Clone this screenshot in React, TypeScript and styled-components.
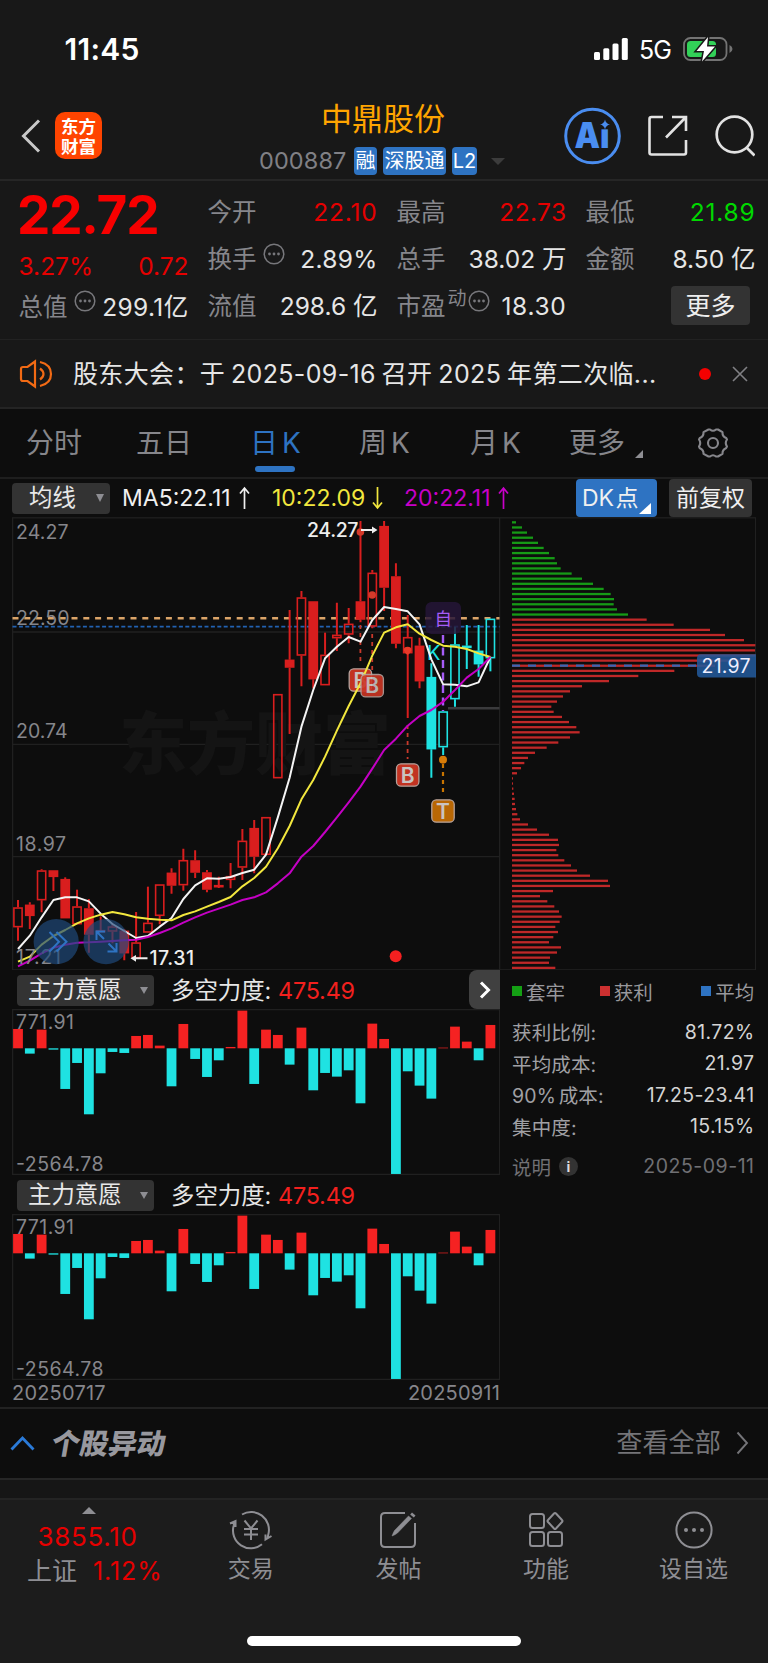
import React from "react";
import styled, { createGlobalStyle } from "styled-components";

const BLUE = "#2e73c2";
const RED = "#e60000";
const UP = "#d91e1e";
const DOWN = "#1fe2e2";
const GRAY = "#86868b";
const FONT = `Inter, "Noto Sans CJK SC", sans-serif`;

const Global = createGlobalStyle`
  * { box-sizing: border-box; }
  body { margin: 0; background: #0d0d0d; }
  svg { display: block; flex: none; }
`;

const Screen = styled.div`
  width: 768px;
  height: 1663px;
  display: flex;
  flex-direction: column;
  background: #0d0d0d;
  color: #e6e6e6;
  font-family: ${FONT};
  overflow: hidden;
  white-space: nowrap;
`;

const StatusBar = styled.div`
  height: 100px;
  flex: none;
  background: #181818;
  display: flex;
  justify-content: space-between;
  padding: 31px 35px 0 64.5px;
`;
const Clock = styled.div`
  font-size: 30px;
  font-weight: 600;
  line-height: 36px;
  color: #fff;
  letter-spacing: 0.3px;
`;
const StatusIcons = styled.div`
  display: flex;
  align-items: center;
  height: 36px;
  gap: 11px;
`;
const Network = styled.span`
  font-size: 25px;
  font-weight: 400;
  line-height: 36px;
  padding-top: 1px;
  color: #fff;
  letter-spacing: -1px;
  width: 33px;
`;

const Header = styled.header`
  height: 81px;
  flex: none;
  background: #181818;
  border-bottom: 2px solid #262626;
  display: flex;
`;
const HeaderSide = styled.div<{ $w: number; $gap: number; $pl: number }>`
  width: ${(p) => p.$w}px;
  flex: none;
  padding: 7px 0 0 ${(p) => p.$pl}px;
  display: flex;
  align-items: flex-start;
  gap: ${(p) => p.$gap}px;
`;
const Logo = styled.div`
  width: 47px;
  height: 47px;
  margin-top: 5px;
  border-radius: 10px;
  background: #ff4400;
  color: #fff;
  font: 700 17.5px/19.5px "Noto Sans CJK SC", sans-serif;
  display: flex;
  flex-direction: column;
  align-items: center;
  justify-content: center;
`;
const TitleBlock = styled.div`
  width: 305px;
  flex: none;
  display: flex;
  flex-direction: column;
`;
const StockName = styled.h1`
  margin: 0 0 0 62px;
  font-size: 31px;
  line-height: 38px;
  font-weight: 400;
  color: #ffa500;
`;
const CodeRow = styled.div`
  display: flex;
  align-items: center;
  height: 28px;
  margin-top: 9px;
`;
const Code = styled.span`
  width: 95px;
  font-size: 23.5px;
  line-height: 28px;
  color: #808085;
  letter-spacing: 0.1px;
`;
const Badge = styled.span<{ $w: number }>`
  width: ${(p) => p.$w}px;
  height: 28px;
  margin-right: 6px;
  border-radius: 4px;
  background: ${BLUE};
  color: #fff;
  font-size: 20px;
  line-height: 28px;
  display: flex;
  justify-content: center;
`;
const Caret = styled.i<{ $w: number; $h: number; $c: string }>`
  border: ${(p) => p.$w / 2}px solid transparent;
  border-top: ${(p) => p.$h}px solid ${(p) => p.$c};
  border-bottom: 0;
`;

const Quote = styled.section`
  height: 159px;
  flex: none;
  background: #181818;
  border-bottom: 1px solid #222;
  padding: 7px 12.5px 0 18.5px;
  display: grid;
  grid-template-columns: repeat(4, 170px);
  column-gap: 19px;
`;
const Column = styled.div`
  display: flex;
  flex-direction: column;
`;
const Field = styled.div<{ $h?: number }>`
  height: ${(p) => p.$h ?? 47.4}px;
  display: flex;
  align-items: center;
  font-size: 24.5px;
  line-height: 30px;
`;
const Price = styled.div`
  height: 54px;
  font-size: 53px;
  line-height: 55px;
  font-weight: 700;
  letter-spacing: -1.2px;
  text-indent: -1.5px;
  color: #f70000;
`;
const Label = styled.span`
  color: ${GRAY};
`;
const Value = styled.span<{ $c?: string; $ls?: number }>`
  margin-left: auto;
  color: ${(p) => p.$c ?? "#e6e6e6"};
  letter-spacing: ${(p) => p.$ls ?? 0}px;
`;
const Superscript = styled.sup`
  font-size: 19px;
  line-height: 20px;
  color: ${GRAY};
  margin: -15px -5px 0 2px;
`;
const MoreInfo = styled.svg`
  margin: -11px 0 0 6px;
`;
const MoreButton = styled.button`
  margin: -1px 5.5px 0 auto;
  width: 79px;
  height: 39px;
  border: 0;
  padding: 0;
  border-radius: 4px;
  background: #333;
  color: #eee;
  font: 400 25px/38px ${FONT};
`;

const Notice = styled.section`
  height: 69px;
  flex: none;
  background: #181818;
  border-bottom: 2px solid #242424;
  display: flex;
  align-items: center;
  padding: 0 20px 0 19px;
`;
const NoticeText = styled.span`
  flex: 1;
  margin-left: 19px;
  font-size: 25px;
  line-height: 32px;
  letter-spacing: 0.35px;
  word-spacing: -1.5px;
`;
const Dot = styled.i`
  width: 12px;
  height: 12px;
  border-radius: 50%;
  background: #f40000;
  margin-right: 21px;
`;

const Tabs = styled.nav`
  height: 70px;
  flex: none;
  border-bottom: 2px solid #1e1e1e;
  display: grid;
  grid-template-columns: 110px 114px 109px 111px 99px 127.5px auto;
  padding-left: 26px;
  align-items: center;
`;
const Tab = styled.div<{ $on?: boolean }>`
  position: relative;
  font-size: 28px;
  line-height: 69px;
  height: 68px;
  color: ${(p) => (p.$on ? BLUE : GRAY)};
  word-spacing: -4px;
  &::after {
    content: "";
    display: ${(p) => (p.$on ? "block" : "none")};
    position: absolute;
    left: 4.5px;
    bottom: 5px;
    width: 40px;
    height: 6px;
    border-radius: 3px;
    background: ${BLUE};
  }
`;
const TabMore = styled(Tab)`
  display: flex;
  gap: 10px;
`;
const Corner = styled.i<{ $w: number; $h: number; $c: string; $b: number }>`
  width: 0;
  height: 0;
  align-self: flex-end;
  margin-bottom: ${(p) => p.$b}px;
  border-left: ${(p) => p.$w}px solid transparent;
  border-bottom: ${(p) => p.$h}px solid ${(p) => p.$c};
`;

const MaRow = styled.div`
  height: 38px;
  flex: none;
  display: flex;
  align-items: center;
  padding-left: 12px;
  font-size: 23px;
`;
const Select = styled.div<{ $w: number; $pl: number }>`
  width: ${(p) => p.$w}px;
  height: 31px;
  border-radius: 4px;
  background: #333;
  color: #e8e8e8;
  font-size: 23.4px;
  line-height: 32px;
  padding: 0 6.5px 0 ${(p) => p.$pl}px;
  display: flex;
  align-items: center;
  justify-content: space-between;
`;
const Average = styled.span<{ $c: string; $w: number; $gap: number }>`
  width: ${(p) => p.$w}px;
  color: ${(p) => p.$c};
  line-height: 39px;
  display: flex;
  align-items: center;
  gap: ${(p) => p.$gap}px;
`;
const Chip = styled.div<{ $w: number; $bg: string }>`
  width: ${(p) => p.$w}px;
  height: 38px;
  border-radius: 4px;
  background: ${(p) => p.$bg};
  color: #f0f0f0;
  line-height: 38px;
  word-spacing: -5px;
  display: flex;
  justify-content: center;
  margin-right: 12px;
`;

const Body = styled.main`
  height: 892px;
  flex: none;
  display: flex;
  padding-left: 12px;
  border-bottom: 2px solid #222;
`;
const Side = styled.div<{ $w: number }>`
  width: ${(p) => p.$w}px;
`;
const IndicatorHead = styled.div`
  height: 39px;
  display: flex;
  align-items: center;
  padding: 1.5px 0 0 5px;
  font-size: 23.4px;
  line-height: 31px;
`;
const IndicatorName = styled.span`
  margin-left: 17px;
  width: 107px;
`;
const IndicatorValue = styled.span`
  color: #f2201e;
  flex: 1;
  letter-spacing: -0.2px;
`;
const NextButton = styled.div`
  width: 31px;
  height: 39px;
  margin-top: -1px;
  border-radius: 8px 0 0 8px;
  background: #404040;
  display: flex;
  align-items: center;
  justify-content: center;
`;
const Dates = styled.div`
  display: flex;
  justify-content: space-between;
  font-size: 20px;
  line-height: 27px;
  letter-spacing: 0.2px;
  color: ${GRAY};
`;

const Stats = styled.div`
  padding: 6px 1.5px 0 12px;
  font-size: 19.5px;
`;
const Legend = styled.div`
  height: 30px;
  display: grid;
  grid-template-columns: 87.7px 101.5px auto;
  align-items: center;
  color: #98989c;
  margin-bottom: 10px;
`;
const LegendItem = styled.span<{ $c: string }>`
  display: flex;
  align-items: center;
  gap: 4px;
  &::before {
    content: "";
    width: 10px;
    height: 10px;
    background: ${(p) => p.$c};
  }
`;
const Stat = styled.div`
  height: 31.5px;
  display: flex;
  justify-content: space-between;
  align-items: center;
  color: #d4d4d4;
  letter-spacing: 0.4px;
  span:first-child {
    color: #a0a0a4;
    word-spacing: -3px;
    letter-spacing: 0.15px;
  }
`;
const StatFoot = styled.div`
  height: 32px;
  margin-top: 8px;
  display: flex;
  align-items: center;
  color: #707074;
  span:last-child {
    letter-spacing: 0.5px;
  }
`;
const Info = styled.i`
  width: 19px;
  height: 19px;
  margin: 0 auto 0 8px;
  border-radius: 50%;
  background: #333;
  color: #ddd;
  font: 700 14px/19px Inter, sans-serif;
  text-align: center;
`;

const Moves = styled.section`
  height: 71px;
  flex: none;
  border-bottom: 2px solid #262626;
  display: flex;
  align-items: center;
  padding: 0 19px 1px 10px;
`;
const MovesTitle = styled.h2`
  margin: -3px auto 0 17px;
  font: 900 28.5px/40px "Noto Sans CJK SC", sans-serif;
  color: #98989e;
  transform: skewX(-10deg);
`;
const ViewAll = styled.span`
  font-size: 26.2px;
  line-height: 40px;
  color: #747478;
  margin-right: 15px;
`;
const Strip = styled.div`
  height: 20px;
  flex: none;
  background: #161616;
  border-bottom: 2px solid #242424;
`;

const Footer = styled.footer`
  flex: 1;
  background: #1c1c1c;
  display: flex;
  flex-direction: column;
  justify-content: space-between;
  align-items: center;
`;
const FooterItems = styled.div`
  display: grid;
  grid-template-columns: 177px repeat(4, 147.6px);
  width: 768px;
`;
const FooterItem = styled.div`
  display: flex;
  flex-direction: column;
  align-items: center;
  padding-top: 9.5px;
  font-size: 23px;
  line-height: 30px;
  color: #8e8e93;
  svg {
    margin-bottom: 4.5px;
  }
`;
const IndexItem = styled.div`
  padding: 7px 0 0 27px;
  color: #8e8e93;
`;
const UpMark = styled.i`
  display: block;
  width: 14px;
  margin-left: 55px;
  border: 7px solid transparent;
  border-bottom: 7px solid #8e8e93;
  border-top: 0;
`;
const IndexValue = styled.div`
  margin: 7px 0 0 10.5px;
  font-size: 26px;
  line-height: 32px;
  color: ${RED};
  letter-spacing: 0.7px;
`;
const IndexRow = styled.div`
  display: flex;
  gap: 16px;
  margin-top: 2px;
  font-size: 25px;
  line-height: 32px;
  span:last-child {
    color: ${RED};
    letter-spacing: 0.9px;
  }
`;
const HomeBar = styled.div`
  width: 274px;
  height: 10px;
  border-radius: 5px;
  background: #fff;
  margin-bottom: 17px;
`;

/* Price levels are stored in thirds of a pixel below y = 510. */
const py = (v: number) => 510 + v / 3;
const px = (i: number) => 18 + 11.81 * i;

/* [filled, body top, body bottom, high, low] */
const candles: [number, number, number, number, number][] = [
  [0, 1192, 1252, 1170, 1292], [1, 1184, 1218, 1177, 1257], [0, 1081, 1171, 1078, 1207],
  [1, 1081, 1101, 1081, 1143], [1, 1107, 1225, 1102, 1225], [0, 1189, 1243, 1139, 1243],
  [1, 1195, 1274, 1167, 1328], [0, 1260, 1263, 1219, 1263], [0, 1249, 1265, 1240, 1300],
  [1, 1262, 1330, 1258, 1351], [0, 1297, 1345, 1206, 1345], [0, 1238, 1268, 1130, 1268],
  [0, 1123, 1218, 1123, 1243], [1, 1088, 1127, 1075, 1151], [0, 1050, 1126, 1016, 1142],
  [1, 1051, 1088, 1021, 1104], [1, 1087, 1139, 1080, 1147], [0, 1125, 1127, 1100, 1134],
  [0, 1098, 1110, 1059, 1135], [0, 992, 1073, 957, 1110], [1, 954, 1040, 930, 1090],
  [0, 921, 1035, 921, 1035], [0, 552, 805, 552, 805], [1, 449, 473, 300, 672],
  [0, 262, 437, 243, 529], [1, 274, 508, 274, 535], [0, 434, 526, 368, 526],
  [0, 374, 385, 278, 423], [0, 341, 374, 294, 400], [1, 274, 329, 33, 337],
  [0, 188, 350, 180, 355], [1, 48, 233, 33, 303], [1, 199, 401, 160, 415],
  [0, 381, 430, 315, 624], [1, 407, 514, 383, 535], [1, 501, 718, 460, 803],
  [0, 604, 712, 604, 735], [0, 403, 568, 350, 590], [0, 407, 409, 345, 477],
  [1, 422, 463, 345, 500], [0, 326, 445, 326, 484],
];
const ma5 = [1317, 1277, 1222, 1170, 1162, 1162, 1174, 1211, 1242, 1263, 1284, 1278, 1250, 1224, 1167, 1126, 1105, 1106, 1101, 1089, 1079, 1034, 922, 803, 650, 540, 445, 410, 381, 395, 330, 291, 297, 304, 343, 448, 523, 524, 529, 517, 441];
const ma10 = [1355, 1340, 1304, 1278, 1260, 1240, 1225, 1214, 1206, 1213, 1222, 1226, 1229, 1231, 1215, 1204, 1190, 1176, 1161, 1129, 1104, 1070, 1015, 948, 868, 810, 740, 662, 588, 520, 437, 368, 352, 343, 371, 390, 407, 410, 417, 430, 441];
const ma20 = [1369, 1352, 1330, 1313, 1304, 1298, 1297, 1295, 1293, 1291, 1289, 1281, 1269, 1255, 1238, 1222, 1208, 1196, 1184, 1170, 1162, 1147, 1120, 1090, 1040, 1008, 966, 922, 877, 830, 776, 720, 686, 647, 618, 600, 575, 540, 503, 477, 441];

/* Length of each price bucket, top to bottom; the first 19 are above the last price. */
const buckets = [
  12, 30, 45, 63, 78, 95, 111, 128, 135, 146, 179, 210, 243, 275, 296, 306, 305, 315, 348,
  404, 485, 594, 639, 696, 730, 729, 730, 689, 609, 487, 379, 291, 210, 174, 153, 135, 118, 125,
  150, 171, 193, 203, 174, 139, 104, 69, 48, 37, 27, 15, 3, 3, 4, 6, 8, 9, 12, 16, 24, 48, 75,
  111, 138, 141, 133, 139, 157, 177, 195, 234, 288, 294, 123, 84, 106, 127, 141, 149, 143, 130,
  138, 124, 111, 147, 135, 114, 111, 130,
];

const force = [58, -16, 56, -4, -122, -44, -198, -75, -11, -14, 37, 40, 8, -114, 73, -32, -86, -36, 4, 113, -107, 56, 40, -49, 62, -126, -74, -85, -66, -165, 74, 28, -377, -69, -112, -151, 2, 65, 20, -36, 70];

const Line = ({ data, color }: { data: number[]; color: string }) => (
  <polyline points={data.map((v, i) => `${px(i)},${py(v)}`).join(" ")} fill="none" stroke={color} strokeWidth="2" strokeLinejoin="round" />
);

const AxisText = ({ x, y, children, fill = GRAY, w }: { x: number; y: number; children: string; fill?: string; w?: number }) => (
  <text x={x} y={y} fill={fill} fontSize="19.5" fontFamily="Inter, sans-serif" textLength={w}>{children}</text>
);

const Tag = ({ x, y, c, t, o = 1 }: { x: number; y: number; c: string; t: string; o?: number }) => (
  <g opacity={o}>
    <rect x={x - 11.2} y={y - 11.2} width="22.4" height="22.4" rx="4.5" fill={c} stroke="#b5a29c" strokeWidth="1.3" />
    <text x={x} y={y + 7.6} textAnchor="middle" fontFamily="Inter, sans-serif" fontWeight="600" fontSize="21" fill="#c9c3c1">{t}</text>
  </g>
);

function PriceChart() {
  return (
    <svg width="488" height="453" viewBox="12 517 488 453">
      <g stroke="#202020" strokeWidth="1.3" fill="none">
        <rect x="12.6" y="517.8" width="487" height="452" />
        <path d="M12 632H500M12 744.3H500M12 856.7H500" />
      </g>
      <text x="119" y="769" fontFamily='"Noto Sans CJK SC", sans-serif' fontWeight="900" fontSize="68" fill="#141414">东方财富</text>
      <path d="M448 708.3H499.5" stroke="#3a3a3c" strokeWidth="2.4" />
      <path d="M12.5 618.3H499.5" stroke="#dba468" strokeWidth="2.4" strokeDasharray="6 5.8" />
      <path d="M12.5 626.7H499.5" stroke="#2262b2" strokeWidth="1.8" strokeDasharray="4 2.4" />
      {candles.map(([filled, top, bottom, high, low], i) => {
        const color = i < 35 ? UP : DOWN;
        const x = px(i);
        const body = Math.max(1, (bottom - top) / 3 - 1.4);
        return (
          <g key={i} stroke={color} strokeWidth="1.6">
            <path d={`M${x} ${py(high)}V${py(top)}M${x} ${py(bottom)}V${py(low)}`} strokeWidth="2" />
            <rect x={x - 4.1} y={py(top) + 0.7} width="8.2" height={body} fill={filled ? color : "none"} />
          </g>
        );
      })}
      <g stroke="#c8392b" strokeWidth="1.8" strokeDasharray="4 4">
        <path d="M360.4 625V664M372.2 634V671M407.6 725V759" />
      </g>
      <g fill="#d43a2a">
        <circle cx="360.4" cy="532" r="3.8" />
        <circle cx="372.2" cy="595" r="3.8" />
        <path d="M403.8 650a3.8 3.3 0 0 1 7.6 0q0 2.5-3.8 5q-3.8-2.5-3.8-5z" fill="#e83a28" />
      </g>
      <Tag x={360.4} y={680} c="#c23322" t="B" />
      <rect x="425.5" y="602" width="35.5" height="32" rx="6" fill="#261638" opacity="0.85" />
      <text x="443.2" y="625" textAnchor="middle" fontFamily='"Noto Sans CJK SC", sans-serif' fontSize="17.5" fill="#a65cf7">自</text>
      <path d="M443 635V711" stroke="#a65cf7" strokeWidth="2.4" strokeDasharray="8 4.5" />
      <text x="427" y="659.5" fontFamily="Inter, sans-serif" fontSize="20" fill={DOWN}>K</text>
      <Line data={ma5} color="#f4f4f4" />
      <Line data={ma10} color="#f2e73e" />
      <Line data={ma20} color="#c400c4" />
      <Tag x={372.2} y={685.7} c="#cc3524" t="B" o={0.9} />
      <Tag x={407.7} y={775} c="#c23322" t="B" />
      <path d="M443 764V796" stroke="#c87400" strokeWidth="2.2" strokeDasharray="4 4" />
      <circle cx="443" cy="759.7" r="4" fill="#d87c08" />
      <Tag x={443} y={811} c="#b96704" t="T" />
      <circle cx="395.7" cy="956.3" r="6" fill="#f52020" />
      <AxisText x={16} y={539.3} w={52.5}>24.27</AxisText>
      <AxisText x={16} y={624.7} w={53.5}>22.50</AxisText>
      <AxisText x={16} y={738} w={51.5}>20.74</AxisText>
      <AxisText x={16} y={850.7} w={50}>18.97</AxisText>
      <AxisText x={16} y={963.7} w={45}>17.21</AxisText>
      <g fill="#1f4a7c" opacity="0.68">
        <circle cx="56.2" cy="941.7" r="22.6" />
        <circle cx="106" cy="941.7" r="22.6" />
      </g>
      <g fill="none" stroke={BLUE} strokeWidth="2">
        <path d="M49.5 932L59 941.7L49.5 951.5M56.5 932L66.5 941.7L56.5 951.5" />
        <path d="M105 931.5H96.5V940M96.5 931.5L104 939M107.5 951.5H116.5V943M116.5 951.5L108.5 943.5" />
      </g>
      <g fill="#eee" stroke="#eee">
        <path d="M361 530H373M133 958.3H147.5" strokeWidth="2" />
        <path d="M372 526.5L377.5 530L372 533.5zM136 955L130.5 958.3L136 961.8z" stroke="none" />
      </g>
      <g fontWeight="500">
        <AxisText x={307} y={537.3} fill="#eee" w={51.5}>24.27</AxisText>
        <AxisText x={149.5} y={965.3} fill="#eee" w={44.5}>17.31</AxisText>
      </g>
    </svg>
  );
}

function CostProfile() {
  return (
    <svg width="256" height="453" viewBox="500 517 256 453">
      <rect x="499.6" y="517.8" width="256" height="452" fill="none" stroke="#202020" strokeWidth="1.3" />
      {buckets.map((n, i) => (
        <rect key={i} x="512" y={521.2 + i * 5.121} width={n / 3} height="2.3" fill={i < 19 ? "#169a16" : "#bf2828"} />
      ))}
      <path d="M512 665.7H700" stroke="#3866b4" strokeWidth="2.3" strokeDasharray="8 8" />
      <path d="M756 654.2H701a4 4 0 0 0-4 4V673.5a4 4 0 0 0 4 4H756z" fill="#22599a" opacity="0.88" />
      <text x="701.5" y="672.9" fontFamily="Inter, sans-serif" fontSize="19.5" fill="#eef" textLength="49">21.97</text>
    </svg>
  );
}

function ForceChart() {
  return (
    <svg width="488" height="166" viewBox="12 0 488 166">
      <rect x="12.6" y="0.6" width="487" height="164.8" fill="none" stroke="#202020" strokeWidth="1.3" />
      <AxisText x={16} y={19.6} w={58}>771.91</AxisText>
      <AxisText x={16} y={161.6} w={87.5}>-2564.78</AxisText>
      {force.map((v, i) => (
        <rect key={i} x={px(i) - 4.9} y={39.3 - Math.max(v, 0) / 3} width="9.8" height={Math.abs(v) / 3} fill={v > 0 ? "#f52222" : DOWN} />
      ))}
    </svg>
  );
}

const Indicator = ({ nav }: { nav?: boolean }) => (
  <>
    <IndicatorHead>
      <Select $w={137} $pl={11}>主力意愿<Caret $w={8.5} $h={7.5} $c="#8e8e93" /></Select>
      <IndicatorName>多空力度:</IndicatorName>
      <IndicatorValue>475.49</IndicatorValue>
      {nav && (
        <NextButton>
          <svg width="12" height="18" viewBox="0 0 12 18"><path d="M2 1.5L9.5 9L2 16.5" fill="none" stroke="#fff" strokeWidth="3" /></svg>
        </NextButton>
      )}
    </IndicatorHead>
    <ForceChart />
  </>
);

const Ellipsis = () => (
  <MoreInfo width="22" height="22" viewBox="0 0 22 22">
    <circle cx="11" cy="11" r="9.8" fill="none" stroke="#77777b" strokeWidth="1.5" />
    <g fill="#77777b"><circle cx="6.5" cy="11" r="1.4" /><circle cx="11" cy="11" r="1.4" /><circle cx="15.5" cy="11" r="1.4" /></g>
  </MoreInfo>
);

const Trend = ({ down }: { down?: boolean }) => (
  <svg width="11" height="24" viewBox="0 0 11 24" fill="none" stroke="currentColor" strokeWidth="1.7">
    <path d={down ? "M5.5 1V22M1 16.5L5.5 22L10 16.5" : "M5.5 23V2M1 7.5L5.5 2L10 7.5"} />
  </svg>
);

export default function App() {
  return (
    <Screen>
      <Global />
      <StatusBar>
        <Clock>11:45</Clock>
        <StatusIcons>
          <svg width="34" height="22" viewBox="0 0 34 22" fill="#fff">
            <rect y="14" width="6" height="8" rx="1.5" /><rect x="9.3" y="10.3" width="6" height="11.7" rx="1.5" />
            <rect x="18.5" y="5.5" width="6" height="16.5" rx="1.5" /><rect x="27.8" width="6" height="22" rx="1.5" />
          </svg>
          <Network>5G</Network>
          <svg width="50" height="26" viewBox="0 0 50 26">
            <rect x="1" y="2" width="42.5" height="22" rx="6.5" fill="none" stroke="#737373" strokeWidth="1.8" />
            <path d="M46.5 9q3 1.5 3 4t-3 4z" fill="#737373" />
            <rect x="4" y="5" width="29" height="16" rx="3.5" fill="#32d158" />
            <path d="M25 1L13.5 15H21L19 25.5L32 10.5H24z" fill="#fff" stroke="#181818" strokeWidth="3" paintOrder="stroke" />
          </svg>
        </StatusIcons>
      </StatusBar>

      <Header>
        <HeaderSide $w={259} $gap={14} $pl={21}>
          <svg width="20" height="58" viewBox="0 0 20 58"><path d="M18 13.5L2.5 29L18 44.5" fill="none" stroke="#c8c8c8" strokeWidth="3" /></svg>
          <Logo><span>东方</span><span>财富</span></Logo>
        </HeaderSide>
        <TitleBlock>
          <StockName>中鼎股份</StockName>
          <CodeRow>
            <Code>000887</Code>
            <Badge $w={23}>融</Badge>
            <Badge $w={63}>深股通</Badge>
            <Badge $w={25}>L2</Badge>
            <Caret $w={14} $h={7} $c="#3c3c3c" style={{ marginLeft: 8 }} />
          </CodeRow>
        </TitleBlock>
        <HeaderSide $w={204} $gap={25.5} $pl={0}>
          <svg width="58" height="58" viewBox="0 0 58 58">
            <circle cx="28.500" cy="29" r="26.8" fill="none" stroke="#4a8df0" strokeWidth="3" />
            <text x="10.5" y="41" fontFamily="Inter, sans-serif" fontWeight="900" fontSize="35" fill="#4a8df0" textLength="35" lengthAdjust="spacingAndGlyphs">Ai</text>
            <rect x="33.5" y="12" width="13" height="10.3" fill="#181818" />
            <path d="M41 12.500Q41.8 16.700 46 17.500Q41.8 18.300 41 22.500Q40.2 18.300 36 17.500Q40.2 16.700 41 12.500z" fill="#4a8df0" />
          </svg>
          <svg width="40" height="58" viewBox="0 0 40 58" fill="none" stroke="#e2e2e2" strokeWidth="2.6">
            <path d="M15 10H3.5Q1.5 10 1.5 12V45.5Q1.5 47.5 3.5 47.5H36Q38 47.5 38 45.5V33M24 10H38V24M37.5 10.5L18 30.5" />
          </svg>
          <svg width="42" height="58" viewBox="0 0 42 58" fill="none" stroke="#e2e2e2" strokeWidth="2.7">
            <circle cx="21.500" cy="27.5" r="17.8" /><path d="M33.5 40.5L41.500 48.5" />
          </svg>
        </HeaderSide>
      </Header>

      <Quote>
        <Column>
          <Price>22.72</Price>
          <Field $h={47}><Value $c={RED} style={{ margin: 0 }}>3.27%</Value><Value $c={RED}>0.72</Value></Field>
          <Field $h={35}><Label>总值</Label><Ellipsis /><Value $ls={0.35}>299.1亿</Value></Field>
        </Column>
        <Column>
          <Field><Label>今开</Label><Value $c={RED} $ls={0.8}>22.10</Value></Field>
          <Field><Label>换手</Label><Ellipsis /><Value $ls={0.3}>2.89%</Value></Field>
          <Field><Label>流值</Label><Value>298.6 亿</Value></Field>
        </Column>
        <Column>
          <Field><Label>最高</Label><Value $c={RED} $ls={0.4}>22.73</Value></Field>
          <Field><Label>总手</Label><Value>38.02 万</Value></Field>
          <Field><Label>市盈</Label><Superscript>动</Superscript><Ellipsis /><Value $ls={0.7}>18.30</Value></Field>
        </Column>
        <Column>
          <Field><Label>最低</Label><Value $c="#00d800" $ls={0.8}>21.89</Value></Field>
          <Field><Label>金额</Label><Value>8.50 亿</Value></Field>
          <Field><MoreButton>更多</MoreButton></Field>
        </Column>
      </Quote>

      <Notice>
        <svg width="35" height="30" viewBox="0 0 35 30" fill="none" stroke="#f26a14" strokeWidth="2.2">
          <path d="M16 2.5V27.5L8.5 22H4Q2 22 2 20V10Q2 8 4 8H8.5zM21 9.5Q24.5 12 24.5 15T21 20.5M21 3Q32 5.5 32 15T21 27" />
        </svg>
        <NoticeText>股东大会：于 2025-09-16 召开 2025 年第二次临...</NoticeText>
        <Dot />
        <svg width="16" height="16" viewBox="0 0 16 16"><path d="M1 1L15 15M15 1L1 15" stroke="#808084" strokeWidth="1.6" /></svg>
      </Notice>

      <Tabs>
        <Tab>分时</Tab>
        <Tab>五日</Tab>
        <Tab $on>日 K</Tab>
        <Tab>周 K</Tab>
        <Tab>月 K</Tab>
        <TabMore>更多<Corner $w={8} $h={8} $c="#8e8e93" $b={19} /></TabMore>
        <svg width="32" height="32" viewBox="0 0 32 32" fill="none" stroke={GRAY} strokeWidth="2.1" strokeLinejoin="round">
          <path d="M11.5 2.5H13Q16 5 19 2.5H21L25.5 5.2Q25.3 9.5 29.2 11L30 12.5Q27.5 16 30 19.5L29 21.2Q25.3 22.5 25.5 26.8L21 29.5H19Q16 27 13 29.5H11.5L6.5 26.8Q6.7 22.5 2.8 21.2L2 19.5Q4.5 16 2 12.5L2.8 11Q6.7 9.5 6.5 5.2z" />
          <circle cx="16" cy="16" r="5" />
        </svg>
      </Tabs>

      <MaRow>
        <Select $w={98} $pl={17}>均线<Caret $w={8.5} $h={8} $c="#8e8e93" /></Select>
        <Average $c="#f0f0f0" $w={150} $gap={8} style={{ marginLeft: 12 }}>MA5:22.11<Trend /></Average>
        <Average $c="#f2e73e" $w={132} $gap={7}>10:22.09<Trend down /></Average>
        <Average $c="#c800c8" $w={171.5} $gap={7}>20:22.11<Trend /></Average>
        <Chip $w={81.5} $bg={BLUE}>DK 点<Corner $w={12} $h={11} $c="#fff" $b={3} /></Chip>
        <Chip $w={83} $bg="#333">前复权</Chip>
      </MaRow>

      <Body>
        <Side $w={488}>
          <PriceChart />
          <Indicator nav />
          <Indicator />
          <Dates><span>20250717</span><span>20250911</span></Dates>
        </Side>
        <Side $w={256}>
          <CostProfile />
          <Stats>
            <Legend>
              <LegendItem $c="#14a014">套牢</LegendItem>
              <LegendItem $c="#cc3030">获利</LegendItem>
              <LegendItem $c={BLUE}>平均</LegendItem>
            </Legend>
            <Stat><span>获利比例:</span><span>81.72%</span></Stat>
            <Stat><span>平均成本:</span><span>21.97</span></Stat>
            <Stat><span>90% 成本:</span><span>17.25-23.41</span></Stat>
            <Stat><span>集中度:</span><span>15.15%</span></Stat>
            <StatFoot><span>说明</span><Info>i</Info><span>2025-09-11</span></StatFoot>
          </Stats>
        </Side>
      </Body>

      <Moves>
        <svg width="25" height="18" viewBox="0 0 25 18"><path d="M1.5 15.5L12.5 4L23.5 15.5" fill="none" stroke="#2a7ad8" strokeWidth="2.8" /></svg>
        <MovesTitle>个股异动</MovesTitle>
        <ViewAll>查看全部</ViewAll>
        <svg width="13" height="24" viewBox="0 0 13 24"><path d="M1.5 1.5L11 12L1.5 22.5" fill="none" stroke="#747478" strokeWidth="1.9" /></svg>
      </Moves>
      <Strip />

      <Footer>
        <FooterItems>
          <IndexItem>
            <UpMark />
            <IndexValue>3855.10</IndexValue>
            <IndexRow><span>上证</span><span>1.12%</span></IndexRow>
          </IndexItem>
          <FooterItem>
            <svg width="44" height="40" viewBox="0 0 44 40" fill="none" stroke="#8e8e93" strokeWidth="2">
              <path d="M13 4.500A17.800 17.800 0 0 1 39.300 24.500L38.500 28M36.5 24.500V29.5L42.5 26M33 34.300A17.800 17.800 0 0 1 4.700 15.500L5.500 11.800M1 13.5L6.5 11V17" />
              <path d="M15.5 10.5L22 18.5L28.5 10.5M22 18.5V30M15 19H29M15 24.5H29" />
            </svg>
            交易
          </FooterItem>
          <FooterItem>
            <svg width="38" height="40" viewBox="0 0 38 40" fill="none" stroke="#8e8e93" strokeWidth="2">
              <path d="M26 3H6Q2 3 2 7V33Q2 37 6 37H32Q36 37 36 33V13" />
              <path d="M13 26Q14 23 15.5 20.5L29.5 6L32.5 8.5L18.5 23Q16 25 13 26z" fill="#8e8e93" strokeWidth="0.5" />
              <path d="M33 2.5L36.5 5.5L34.8 7.5L31.2 4.5z" fill="#8e8e93" stroke="none" />
            </svg>
            发帖
          </FooterItem>
          <FooterItem>
            <svg width="36" height="40" viewBox="0 0 36 40" fill="none" stroke="#8e8e93" strokeWidth="2">
              <rect x="2" y="4" width="14" height="14" rx="2.5" /><rect x="2" y="22" width="14" height="14" rx="2.5" /><rect x="20" y="22" width="14" height="14" rx="2.5" />
              <path d="M26 3.5Q27 2.5 28 3.5L34 10Q35 11 34 12L28 18.5Q27 19.5 26 18.5L20 12Q19 11 20 10z" />
            </svg>
            功能
          </FooterItem>
          <FooterItem>
            <svg width="38" height="40" viewBox="0 0 38 40">
              <circle cx="19" cy="20" r="17.6" fill="none" stroke="#8e8e93" strokeWidth="2" />
              <g fill="#8e8e93"><circle cx="11" cy="20" r="2" /><circle cx="19" cy="20" r="2" /><circle cx="27" cy="20" r="2" /></g>
            </svg>
            设自选
          </FooterItem>
        </FooterItems>
        <HomeBar />
      </Footer>
    </Screen>
  );
}
